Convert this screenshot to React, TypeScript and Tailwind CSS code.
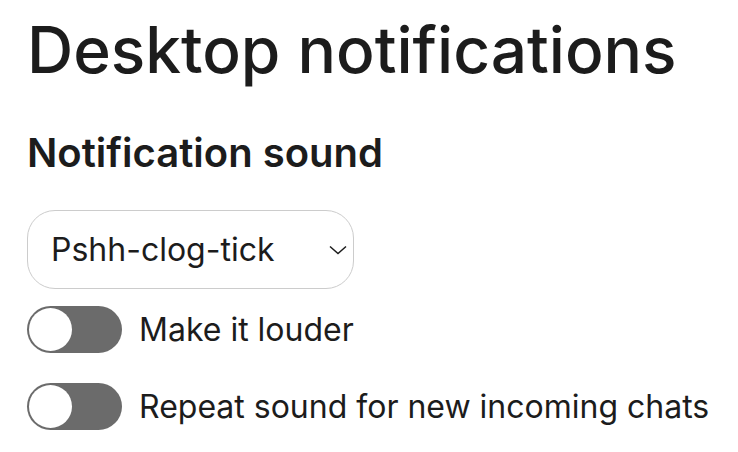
import React from "react";

const Toggle: React.FC<{ label: string }> = ({ label }) => (
  <label className="flex items-center gap-[17px]">
    <span className="flex h-[47px] w-[95px] items-center rounded-full bg-[#6b6b6b] p-[2px]">
      <span className="h-[43px] w-[43px] rounded-full bg-white" />
    </span>
    <span className="text-[32px] leading-none text-[#1c1c1c]">{label}</span>
  </label>
);

const App: React.FC = () => {
  return (
    <div
      className="min-h-screen bg-white pl-[27px] pt-[18px] text-[#1c1c1c]"
      style={{ fontFamily: "Inter, 'Noto Sans', sans-serif" }}
    >
      <h1 className="text-[64px] font-medium leading-[64px]">
        Desktop notifications
      </h1>
      <h2 className="mt-[51px] text-[40px] font-semibold leading-none">
        Notification sound
      </h2>
      <div className="mt-[37px] flex h-[79px] w-[327px] items-center justify-between rounded-[28px] border-[1.5px] border-[#cccccc] pl-[23px] pr-[6px]">
        <span className="text-[32px] leading-none">Pshh-clog-tick</span>
        <svg width="18" height="10" viewBox="0 0 18 10" fill="none">
          <path d="M1 1.5l8 7 8-7" stroke="#1c1c1c" strokeWidth="1.5" />
        </svg>
      </div>
      <div className="mt-[17px] flex flex-col gap-[30px]">
        <Toggle label="Make it louder" />
        <Toggle label="Repeat sound for new incoming chats" />
      </div>
    </div>
  );
};

export default App;
